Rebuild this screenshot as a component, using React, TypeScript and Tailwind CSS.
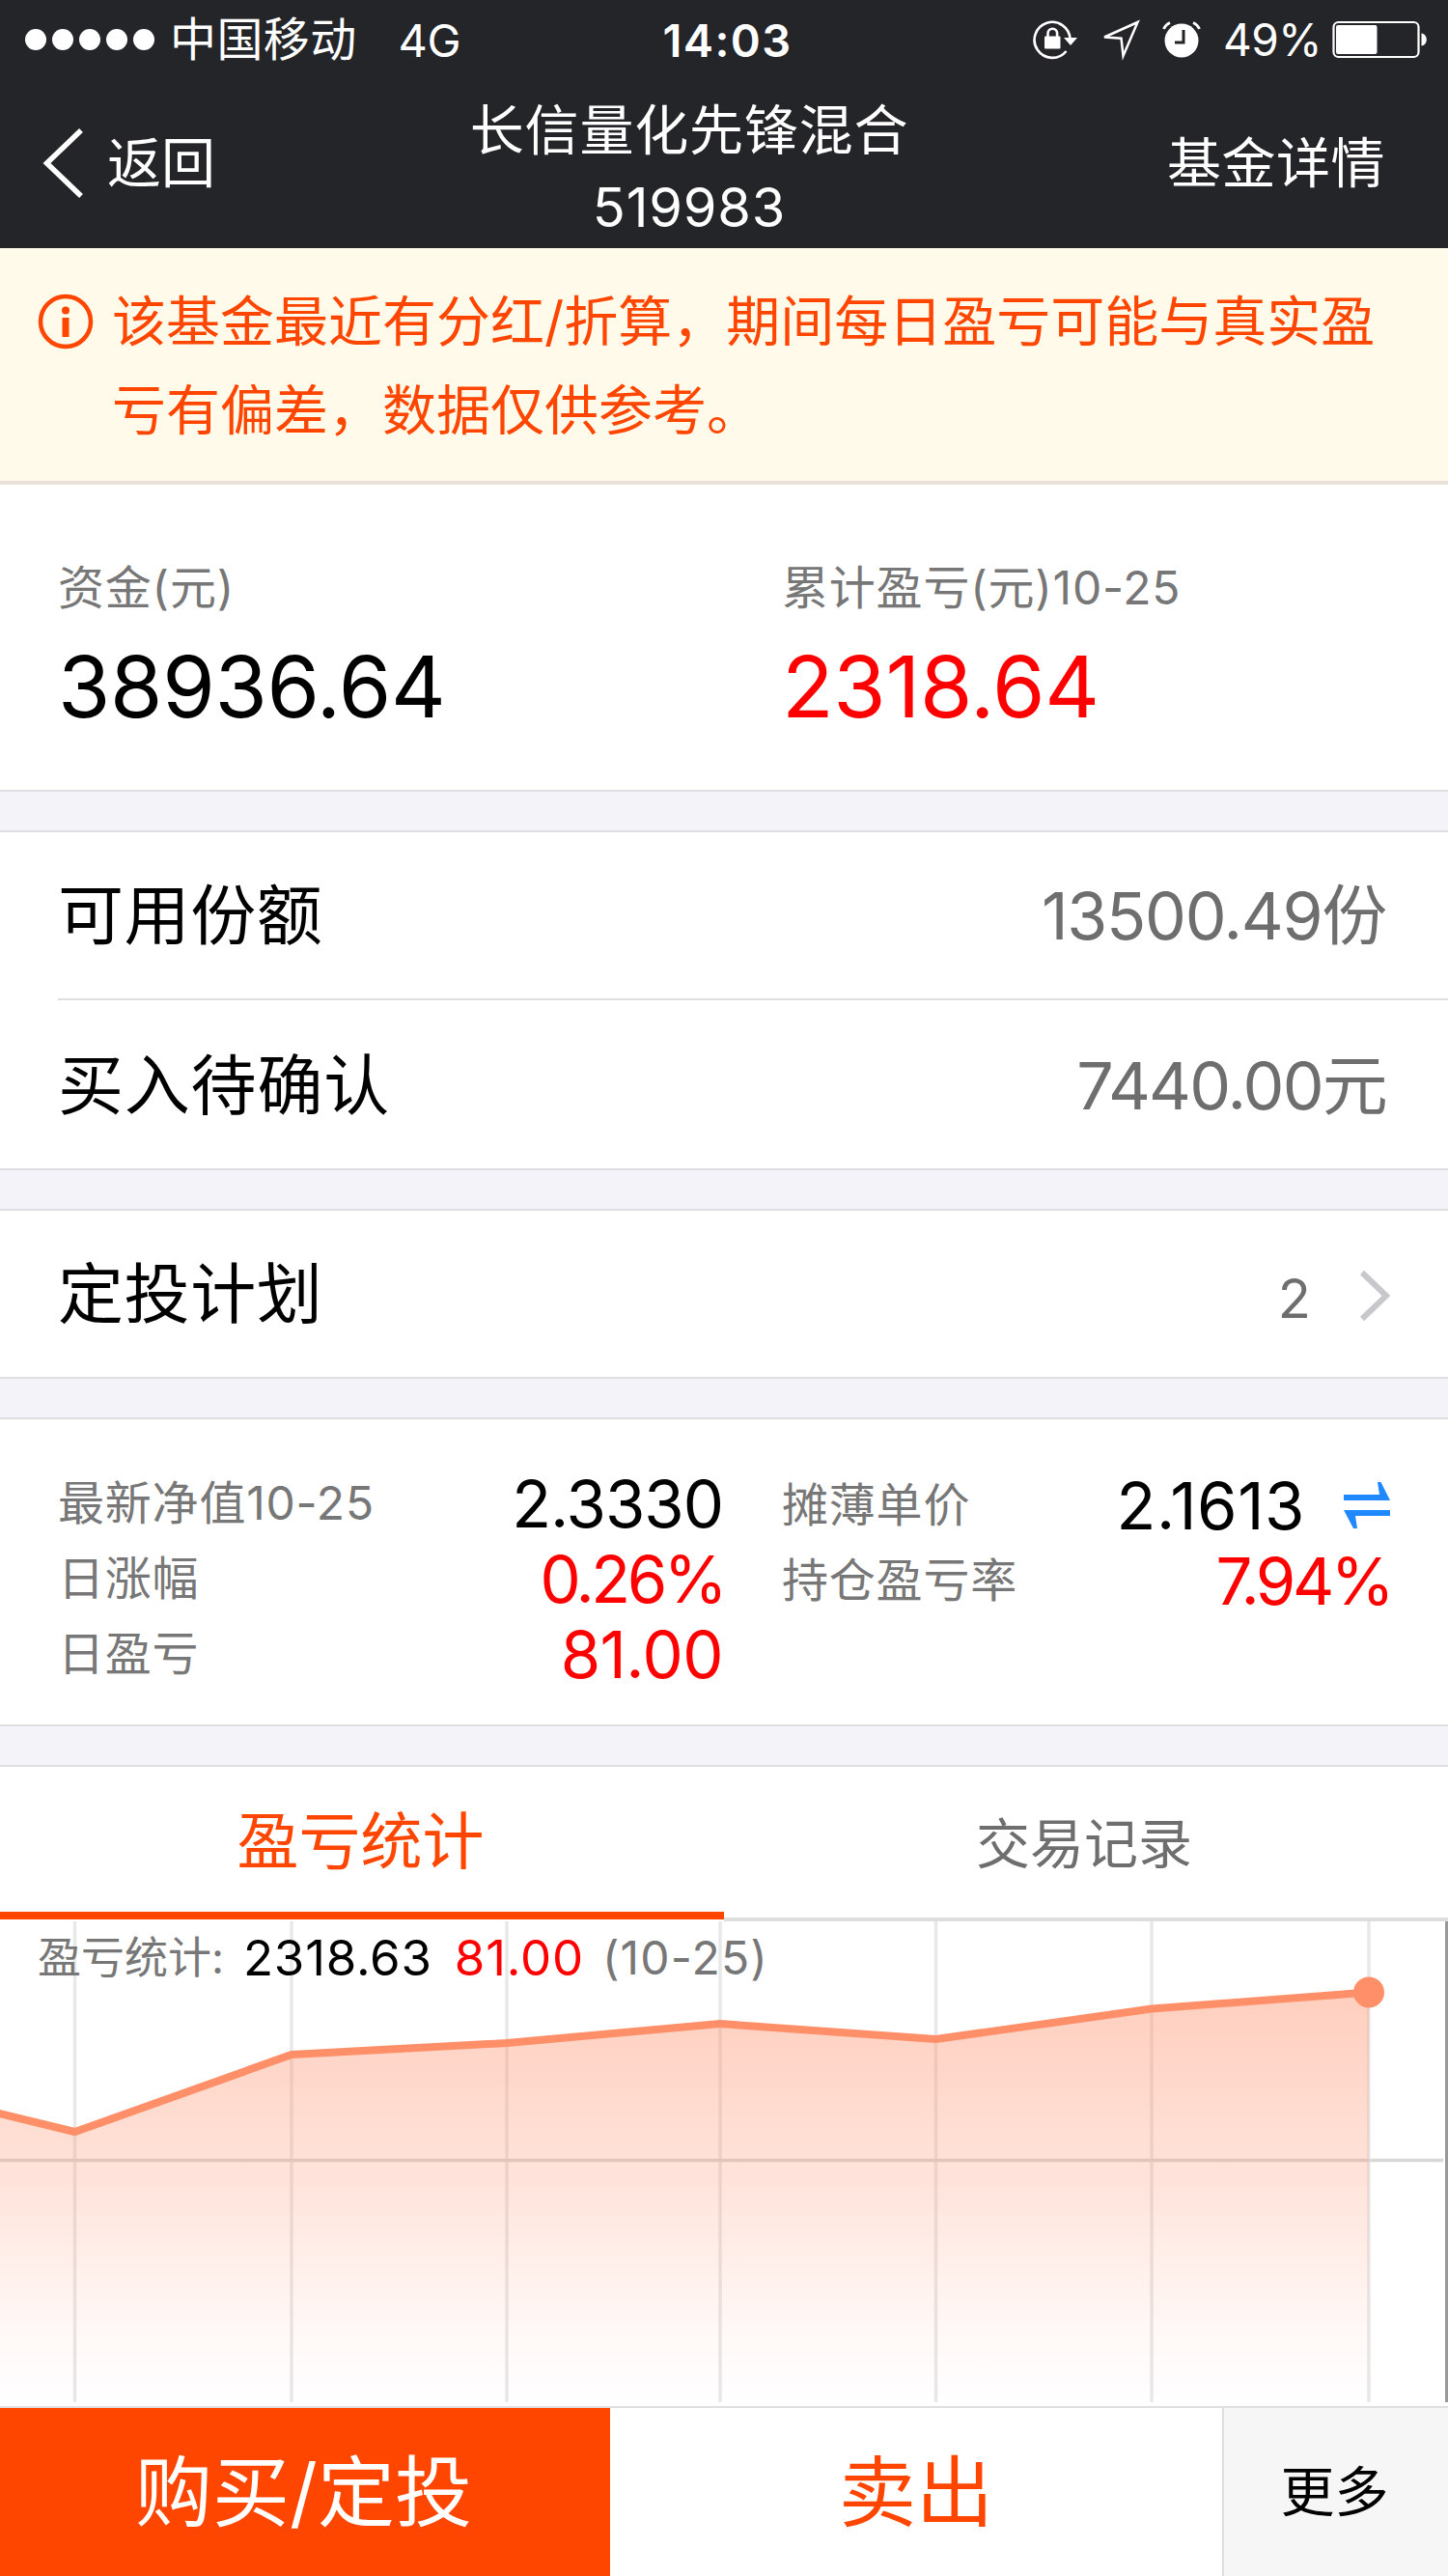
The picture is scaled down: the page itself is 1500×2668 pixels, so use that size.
import React from 'react';
import { clsx } from 'clsx';

const points = [
  { x: -147, y: 163 },
  { x: 77.5, y: 218 },
  { x: 302, y: 138 },
  { x: 525, y: 126 },
  { x: 746, y: 106 },
  { x: 969.5, y: 122 },
  { x: 1193, y: 90.5 },
  { x: 1418, y: 73.5 },
];

const StatusBar: React.FC = () => (
  <div className="flex h-[82px] items-center pl-[26px] pr-[22px] text-[48px] leading-none">
    <div className="flex flex-1 items-center">
      <div className="flex gap-[6px]">
        {[0, 1, 2, 3, 4].map((i) => (
          <span key={i} className="h-[22px] w-[22px] rounded-full bg-white" />
        ))}
      </div>
      <span className="ml-[16px] tracking-[0.4px]">中国移动</span>
      <span className="ml-[43px] text-[47px] tracking-[-0.5px]">4G</span>
    </div>
    <span className="pl-[3px] text-[47px] font-semibold tracking-[1.4px]">14:03</span>
    <div className="flex flex-1 items-center justify-end">
      <svg className="h-[44px] w-[50px]" viewBox="0 0 50 44" fill="none">
        <path d="M38.6 22A18.5 18.5 0 1 0 34.5 34" stroke="white" strokeWidth="2.6" />
        <path d="M32 20h14l-7 8z" fill="white" />
        <rect x="12" y="18.5" width="16.5" height="13" rx="1" fill="white" />
        <path d="M15.5 19v-3.5a4.8 4.8 0 0 1 9.6 0V19" stroke="white" strokeWidth="2.6" />
      </svg>
      <svg className="ml-[20px] h-[44px] w-[44px]" viewBox="0 0 44 44" fill="none">
        <path d="M38.5 4 4 19.500l17.5 1.2L23.5 39z" stroke="white" strokeWidth="2.5" />
      </svg>
      <svg className="ml-[19px] h-[44px] w-[42px]" viewBox="0 0 42 44" fill="none">
        <circle cx="21" cy="23" r="17.5" fill="white" />
        <path d="M2.5 11A12 12 0 0 1 9 4.500M33 4.500A12 12 0 0 1 39.5 11" stroke="white" strokeWidth="2.8" />
        <path d="M23 12v13h-9" stroke="#242529" strokeWidth="3" />
      </svg>
      <span className="ml-[22px] text-[46px] tracking-[-0.5px]">49%</span>
      <svg className="ml-[11px] h-[40px] w-[98px]" viewBox="0 0 98 40" fill="none">
        <rect x="1.5" y="2" width="88" height="36" rx="5" stroke="white" strokeWidth="2.2" />
        <rect x="4" y="5" width="42.5" height="30" rx="2" fill="white" />
        <path d="M92.5 13.5c7 1 7 12 0 13z" fill="white" />
      </svg>
    </div>
  </div>
);

const NavBar: React.FC = () => (
  <div className="grid h-[174px] grid-cols-[486px_1fr_292px] items-center text-[56px] leading-none">
    <button className="flex items-center pl-[44px]">
      <svg className="h-[74px] w-[44px]" viewBox="0 0 44 74" fill="none">
        <path d="M40 3 4.5 37 40 71" stroke="white" strokeWidth="5.5" />
      </svg>
      <span className="ml-[23px]">返回</span>
    </button>
    <div className="flex w-[456px] flex-col items-center whitespace-nowrap pt-[11px] leading-[80px]">
      <span className="tracking-[0.8px]">长信量化先锋混合</span>
      <span className="tracking-[0.8px]">519983</span>
    </div>
    <button className="whitespace-nowrap pr-[65px] text-right tracking-[0.5px]">基金详情</button>
  </div>
);

const Notice: React.FC = () => (
  <div className="flex h-[245px] border-b-4 border-[#e8e0d9] bg-[#fffaea] pt-[30px] text-[#ff4600]">
    <svg className="ml-[39px] mt-[17px] h-[58px] w-[58px] shrink-0" viewBox="0 0 58 58" fill="none">
      <circle cx="29" cy="29" r="26" stroke="currentColor" strokeWidth="4.5" />
      <circle cx="29" cy="17.5" r="4" fill="currentColor" />
      <path d="M29 25v20" stroke="currentColor" strokeWidth="7" />
    </svg>
    <p className="ml-[19px] whitespace-nowrap text-[56px] leading-[92px]">
      该基金最近有分红/折算，期间每日盈亏可能与真实盈
      <br />
      亏有偏差，数据仅供参考。
    </p>
  </div>
);

const Gap: React.FC = () => <div className="h-[44px] border-y-2 border-[#dfdfe3] bg-[#f3f3f9]" />;

type StatRowProps = { label: string; value: string; tracking: string; red?: boolean; icon?: boolean };

const StatRow: React.FC<StatRowProps> = ({ label, value, tracking, red, icon }) => (
  <div className="flex h-[78px] items-center justify-between">
    <span className="text-[48px] tracking-[0.8px] text-[#777]">{label}</span>
    <span className={clsx('flex items-center text-[67px]', tracking, red ? 'text-[#ff0000]' : 'text-black')}>
      {value}
      {icon && (
        <svg className="ml-[39px] h-[50px] w-[50px]" viewBox="0 0 50 50" fill="#2089ff">
          <path d="M1 14h37L36 1h3.500L49 20H1zM49 36H13l2 13h-4L1 30h48z" />
        </svg>
      )}
    </span>
  </div>
);

const Chart: React.FC = () => {
  const line = points.map((p) => `${p.x},${p.y}`).join(' ');
  const last = points[points.length - 1];
  return (
    <div className="relative h-[502px]">
      <svg className="block h-[502px] w-full" viewBox="0 0 1500 502" fill="none">
        <defs>
          <linearGradient id="profit" gradientUnits="userSpaceOnUse" x1="0" y1="74" x2="0" y2="498">
            <stop offset="0" stopColor="#ff8f69" stopOpacity="0.43" />
            <stop offset="0.45" stopColor="#ff8f69" stopOpacity="0.25" />
            <stop offset="0.8" stopColor="#ff8f69" stopOpacity="0.07" />
            <stop offset="1" stopColor="#ff8f69" stopOpacity="0" />
          </linearGradient>
        </defs>
        {points.slice(1).map((p) => (
          <path key={p.x} d={`M${p.x} 0V498`} stroke="#e8e8e8" strokeWidth="3.5" />
        ))}
        <path d="M0 247.5H1495" stroke="#d8d8d8" strokeWidth="3.5" />
        <path d="M1498.5 0V498" stroke="#999" strokeWidth="3" />
        <polygon points={`-147,498 ${line} ${last.x},498`} fill="url(#profit)" />
        <polyline points={line} stroke="#ff8f69" strokeWidth="8" />
        <circle cx={last.x} cy={last.y} r="16" fill="#ff8f69" />
      </svg>
      <div className="absolute left-[39px] top-0 flex h-[76px] items-center whitespace-nowrap text-[51px] text-black">
        <span className="text-[45px] text-[#777]">盈亏统计:</span>
        <span className="ml-[20px] tracking-[0.8px]">2318.63</span>
        <span className="ml-[23px] tracking-[0.8px] text-[#ff0000]">81.00</span>
        <span className="ml-[19px] text-[48px] tracking-[1.2px] text-[#777]">(10-25)</span>
      </div>
    </div>
  );
};

export default function App() {
  return (
    <div className="flex h-[2668px] w-[1500px] flex-col overflow-hidden bg-white font-['Inter','Noto_Sans_CJK_SC',sans-serif] font-normal text-black">
      <header className="h-[257px] bg-[#242529] text-white">
        <StatusBar />
        <NavBar />
      </header>
      <Notice />

      <section className="grid h-[316px] grid-cols-[750px_1fr] pl-[60px] pt-[67px]">
        <div>
          <p className="text-[48px] leading-[80px] tracking-[0.8px] text-[#777]">资金(元)</p>
          <p className="mt-[12px] text-[88px] leading-[100px] tracking-[-0.3px]">38936.64</p>
        </div>
        <div>
          <p className="text-[48px] leading-[80px] tracking-[0.8px] text-[#777]">累计盈亏(元)10-25</p>
          <p className="mt-[12px] text-[88px] leading-[100px] tracking-[-0.3px] text-[#ff0000]">2318.64</p>
        </div>
      </section>
      <Gap />

      <section className="pl-[60px] text-[68px] leading-none">
        <div className="flex h-[174px] items-center justify-between border-b-2 border-[#dfdfe1] pr-[64px]">
          <span className="tracking-[0.6px]">可用份额</span>
          <span className="tracking-[-1.3px] text-[#6e6e6e]">13500.49份</span>
        </div>
        <div className="flex h-[174px] items-center justify-between pr-[64px] pt-[2px]">
          <span className="tracking-[0.8px]">买入待确认</span>
          <span className="tracking-[-1.8px] text-[#6e6e6e]">7440.00元</span>
        </div>
      </section>
      <Gap />

      <section className="flex h-[172px] items-center justify-between pl-[60px] pr-[59px] text-[68px] leading-none">
        <span className="tracking-[0.6px]">定投计划</span>
        <span className="flex items-center pt-[10px] text-[56px] text-[#6e6e6e]">
          2
          <svg className="mb-[6px] ml-[49px] h-[54px] w-[34px]" viewBox="0 0 34 54" fill="none">
            <path d="M4 3 29 27 4 51" stroke="#c7c7cc" strokeWidth="6" />
          </svg>
        </span>
      </section>
      <Gap />

      <section className="grid h-[316px] grid-cols-[689px_631px] gap-x-[61px] pl-[60px] pt-[48px] leading-none">
        <div>
          <StatRow label="最新净值10-25" value="2.3330" tracking="tracking-[-1px]" />
          <StatRow label="日涨幅" value="0.26%" tracking="tracking-[-3.500px] -mr-[1px]" red />
          <StatRow label="日盈亏" value="81.00" tracking="tracking-[-0.500px]" red />
        </div>
        <div className="pt-[2px]">
          <StatRow label="摊薄单价" value="2.1613" tracking="tracking-[0.600px]" icon />
          <StatRow label="持仓盈亏率" value="7.94%" tracking="tracking-[-3.500px]" red />
        </div>
      </section>
      <Gap />

      <section>
        <div className="grid h-[160px] grid-cols-2 text-center leading-[146px]">
          <button className="mb-[2px] border-b-8 border-[#ff4600] pr-[3px] pt-[4px] text-[64px] text-[#ff4600]">盈亏统计</button>
          <button className="border-b-4 border-[#dedede] pr-[4px] pt-[4px] text-[56px] text-[#6e6e6e]">交易记录</button>
        </div>
        <Chart />
      </section>

      <footer className="grid flex-1 grid-cols-[632px_634px_1fr] border-t-2 border-[#dfdfe1] text-[80px]">
        <button className="bg-[#ff4600] pr-[3px] text-[80px] text-white">购买/定投</button>
        <button className="text-[#ff4600]">卖出</button>
        <button className="border-l-2 border-[#dfdfe1] bg-[#f6f6f7] pr-[3px] text-[56px]">更多</button>
      </footer>
    </div>
  );
}
